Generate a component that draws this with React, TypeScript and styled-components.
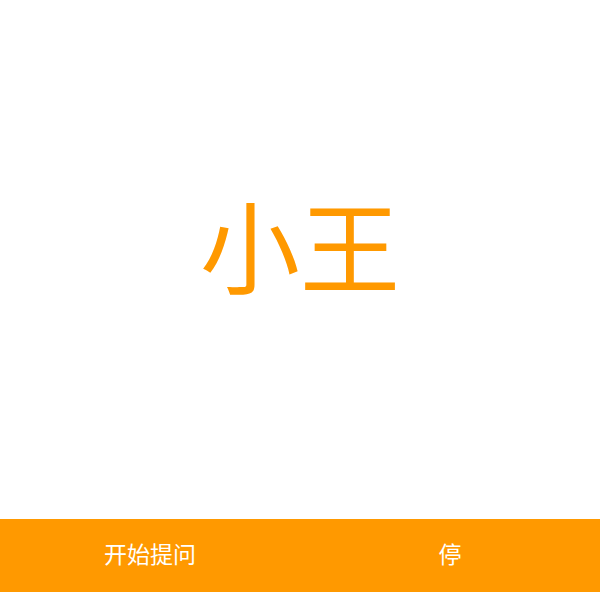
import React from "react";
import styled, { createGlobalStyle } from "styled-components";

const ORANGE = "#ff9900";

const GlobalStyle = createGlobalStyle`
  html, body {
    margin: 0;
    padding: 0;
    background: #ffffff;
    font-family: "Noto Sans CJK SC", "Noto Sans", sans-serif;
  }
`;

const Page = styled.div`
  display: flex;
  flex-direction: column;
  width: 600px;
  height: 592px;
`;

const Stage = styled.main`
  flex: 1;
  display: flex;
  align-items: center;
  justify-content: center;
`;

const Name = styled.h1`
  margin: 0;
  font-size: 100px;
  font-weight: 400;
  line-height: 1;
  color: ${ORANGE};
  padding-bottom: 33px;
`;

const Toolbar = styled.footer`
  display: flex;
  height: 73px;
  background: ${ORANGE};
`;

const ToolButton = styled.button`
  flex: 1;
  border: none;
  background: transparent;
  color: #ffffff;
  font-family: inherit;
  font-size: 23px;
  cursor: pointer;
  padding: 0 0 5px;
`;

export default function App() {
  return (
    <>
      <GlobalStyle />
      <Page>
        <Stage>
          <Name>小王</Name>
        </Stage>
        <Toolbar>
          <ToolButton>开始提问</ToolButton>
          <ToolButton>停</ToolButton>
        </Toolbar>
      </Page>
    </>
  );
}
